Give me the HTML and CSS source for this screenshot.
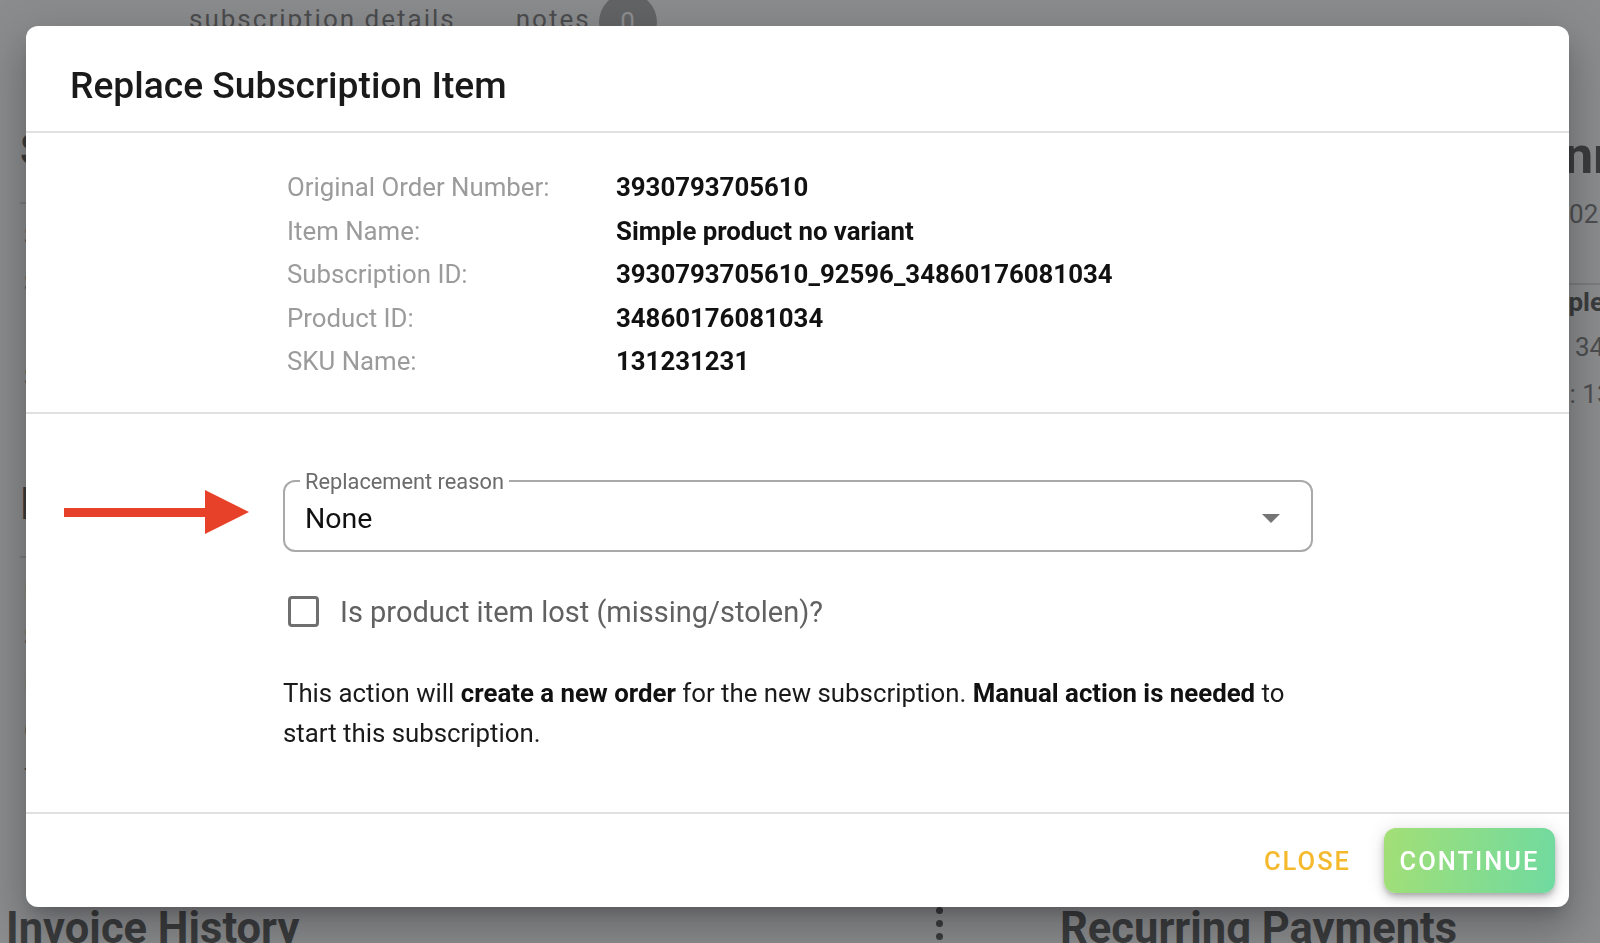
FILE: index.html
```html
<!DOCTYPE html>
<html lang="en">
<head>
  <meta charset="UTF-8" />
  <title>Replace Subscription Item</title>
  <link rel="stylesheet" href="styles.css">
</head>
<body>

  <div class="page">
    <nav class="tabs">
      <span class="tab">subscription details</span>
      <span class="tab">notes <span class="badge">0</span></span>
    </nav>

    <div class="page-body">
      <section class="col-left">
        <h2 class="col-heading">Subscription</h2>
        <hr class="col-rule">
        <p class="col-line">Status: Active</p>
        <p class="col-line">Started: 2024</p>
        <p class="col-line">Interval: month</p>
        <p class="col-line">Shop: demo</p>
        <h2 class="col-heading second">Items</h2>
        <hr class="col-rule">
        <p class="col-line">Name: Simple</p>
        <p class="col-line">SKU: 131231231</p>
        <p class="col-line">Price: 10.00</p>
        <p class="col-line">Qty: 1</p>
        <p class="col-line">Total: 10.00</p>
      </section>

      <section class="col-right">
        <h2 class="col-heading right-head">Annual</h2>
        <p class="col-line r-date">10.02.2024</p>
        <hr class="col-rule r-rule">
        <p class="col-line r-name">Simple product</p>
        <p class="col-line r-id">ID: 34860176081034</p>
        <p class="col-line r-sku">SKU: 131231231</p>
      </section>
    </div>

    <div class="page-bottom">
      <h2 class="bottom-title invoice">Invoice History</h2>
      <span class="kebab"><i></i><i></i><i></i></span>
      <h2 class="bottom-title recurring">Recurring Payments</h2>
    </div>
  </div>

  <div class="dialog">
    <header class="dialog-title">Replace Subscription Item</header>

    <section class="dialog-info">
      <div class="info-grid">
        <span class="info-label">Original Order Number:</span>
        <span class="info-value">3930793705610</span>
        <span class="info-label">Item Name:</span>
        <span class="info-value">Simple product no variant</span>
        <span class="info-label">Subscription ID:</span>
        <span class="info-value">3930793705610_92596_34860176081034</span>
        <span class="info-label">Product ID:</span>
        <span class="info-value">34860176081034</span>
        <span class="info-label">SKU Name:</span>
        <span class="info-value">131231231</span>
      </div>
    </section>

    <section class="dialog-form">
      <svg class="pointer-arrow" width="186" height="45" viewBox="0 0 186 45">
        <path d="M0 18 H141 V0 L185 22 L141 44 V27 H0 Z" fill="#e8412a"/>
      </svg>

      <fieldset class="select-field">
        <legend>Replacement reason</legend>
        <div class="select-value">
          <span>None</span>
          <svg width="18" height="9" viewBox="0 0 18 9"><polygon points="0,0 18,0 9,9" fill="#757575"/></svg>
        </div>
      </fieldset>

      <label class="check-row">
        <span class="check-box"></span>
        <span class="check-text">Is product item lost (missing/stolen)?</span>
      </label>

      <p class="note">This action will <b>create a new order</b> for the new subscription. <b>Manual action is needed</b> to start this subscription.</p>
    </section>

    <footer class="dialog-actions">
      <button class="btn-close">Close</button>
      <button class="btn-continue">Continue</button>
    </footer>
  </div>

</body>
</html>
```

FILE: styles.css
```css
body {
  margin: 0;
  height: 943px;
  overflow: hidden;
  background: #8b8c8e;
  font-family: Roboto, "Liberation Sans", sans-serif;
}

/* page behind the dialog */
.page {
  height: 1000px;
  display: flex;
  flex-direction: column;
}

.tabs {
  display: flex;
  gap: 60px;
  height: 40px;
  padding-left: 189px;
}

.tab {
  display: flex;
  align-items: center;
  margin-top: 4px;
  height: 30px;
  font-size: 26px;
  line-height: 30px;
  letter-spacing: 2px;
  color: #4b4c4e;
}

.badge {
  position: relative;
  top: 3px;
  width: 58px;
  height: 58px;
  margin-left: 8px;
  border-radius: 50%;
  background: #636466;
  color: #8e8f91;
  display: flex;
  align-items: center;
  justify-content: center;
  letter-spacing: 0;
}

.page-body {
  display: flex;
}

.col-left {
  margin-left: 20px;
  width: 600px;
  white-space: nowrap;
}

.col-heading {
  margin: 84px 0 0;
  font-size: 44px;
  line-height: 52px;
  font-weight: 700;
  color: #3b3c3e;
}

.col-heading.second {
  margin-top: 86px;
}

.col-rule {
  margin: 26px 0 0;
  border: none;
  border-top: 2px solid #7b7c7e;
}

.col-line {
  margin: 17px 0 0 4px;
  font-size: 26px;
  line-height: 30px;
  color: #4d4e50;
}

.col-right {
  margin-left: auto;
  width: 79px;
  white-space: nowrap;
}

.right-head {
  margin: 86px 0 0 9px;
  font-size: 52px;
  line-height: 60px;
}

.r-date { margin: 13px 0 0 12px; }
.r-rule { margin-top: 54px; }
.r-name { margin: 2px 0 0 2px; font-weight: 700; color: #3b3c3e; }
.r-id { margin: 15px 0 0 17px; }
.r-sku { margin: 17px 0 0 0; }

.page-bottom {
  margin-top: auto;
  height: 97px;
  display: flex;
  align-items: flex-start;
  padding-left: 6px;
}

.bottom-title {
  margin: 0;
  font-size: 43.5px;
  line-height: 52px;
  font-weight: 700;
  color: #3b3c3e;
  white-space: nowrap;
}

.bottom-title.invoice {
  flex: 0 0 930px;
}

.kebab {
  display: flex;
  flex-direction: column;
  gap: 6px;
  margin-top: 4px;
}

.kebab i {
  width: 7px;
  height: 7px;
  border-radius: 50%;
  background: #3b3c3e;
}

.bottom-title.recurring {
  margin-left: 117px;
}

/* dialog */
.dialog {
  position: fixed;
  top: 26px;
  left: 26px;
  width: 1543px;
  background: #fff;
  border-radius: 12px;
  overflow: hidden;
  box-shadow: 0 11px 15px -7px rgba(0,0,0,0.2), 0 24px 38px 3px rgba(0,0,0,0.14), 0 9px 46px 8px rgba(0,0,0,0.12);
}

.dialog-title {
  padding: 39px 44px 26px;
  font-size: 37.2px;
  line-height: 40px;
  font-weight: 500;
  color: #1a1a1a;
  border-bottom: 2px solid #e0e0e0;
}

.dialog-info {
  padding: 33px 0 28px 261px;
  border-bottom: 2px solid #e0e0e0;
}

.info-grid {
  display: grid;
  grid-template-columns: 329px auto;
  grid-auto-rows: 43.6px;
  align-items: center;
  font-size: 25.8px;
  line-height: 43.6px;
}

.info-label {
  color: #9b9b9b;
}

.info-value {
  color: #111;
  font-weight: 700;
}

.dialog-form {
  position: relative;
  padding: 57px 0 59px 257px;
  border-bottom: 2px solid #e0e0e0;
}

.pointer-arrow {
  position: absolute;
  left: 38px;
  top: 76px;
}

.select-field {
  width: 1030px;
  box-sizing: border-box;
  margin: 0;
  padding: 0 0 0 15px;
  border: 2px solid #a9a9a9;
  border-radius: 12px;
}

.select-field legend {
  padding: 0 5px;
  font-size: 21.8px;
  line-height: 21px;
  color: #6b6b6b;
}

.select-value {
  height: 58px;
  box-sizing: border-box;
  padding: 0 31px 5px 5px;
  display: flex;
  align-items: center;
  justify-content: space-between;
  font-size: 28.5px;
  color: #111;
}

.check-row {
  display: flex;
  align-items: center;
  gap: 21px;
  height: 32px;
  margin-top: 44px;
  padding-left: 5px;
}

.check-box {
  width: 31px;
  height: 31px;
  box-sizing: border-box;
  border: 3px solid #6f6f6f;
  border-radius: 4px;
}

.check-text {
  font-size: 29px;
  line-height: 32px;
  color: #616161;
}

.note {
  width: 1030px;
  margin: 46px 0 0;
  font-size: 25.8px;
  line-height: 39.6px;
  color: #1a1a1a;
}

.note b {
  font-weight: 700;
  color: #111;
}

.dialog-actions {
  height: 93px;
  display: flex;
  align-items: center;
  justify-content: flex-end;
  padding-right: 14px;
}

button {
  font-family: inherit;
  font-size: 25.5px;
  font-weight: 500;
  letter-spacing: 2px;
  text-transform: uppercase;
  border: none;
  cursor: pointer;
}

.btn-close {
  background: none;
  color: #f5b92e;
  padding: 0 16px;
  margin-right: 17px;
  height: 65px;
}

.btn-continue {
  width: 171px;
  height: 65px;
  border-radius: 12px;
  color: #fff;
  background: linear-gradient(100deg, #a3df76 0%, #6fdaa0 100%);
  box-shadow: 0 3px 5px -1px rgba(0,0,0,0.2), 0 6px 10px 0 rgba(0,0,0,0.14), 0 1px 18px 0 rgba(0,0,0,0.12);
}
```
